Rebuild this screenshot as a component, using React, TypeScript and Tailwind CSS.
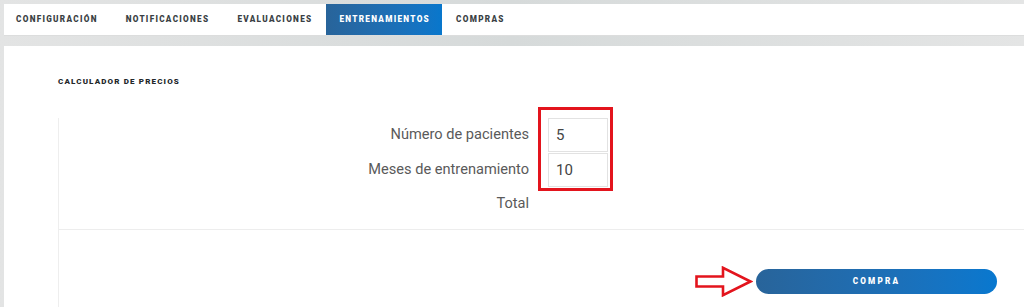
const tabs = ["CONFIGURACIÓN", "NOTIFICACIONES", "EVALUACIONES", "ENTRENAMIENTOS", "COMPRAS"];

const Arrow = () => (
  <svg width="58" height="31" viewBox="0 0 58 31" className="shrink-0">
    <path
      d="M1.5 10.5 H28 V1.8 L55.5 15.5 L28 29.2 V20.5 H1.5 Z"
      fill="white"
      stroke="#e3141d"
      strokeWidth="2.6"
      strokeLinejoin="miter"
    />
  </svg>
);

const App = () => {
  return (
    <div className="w-full h-[307px] overflow-hidden pl-[4px] pt-[4px] bg-gradient-to-r from-[#e3e4e4] via-[#d6dada] to-[#e4e5e5] font-['Roboto',sans-serif]">
      <div className="h-[32px] bg-white border-b border-[#dcdddd] flex items-stretch">
        {tabs.map((t, i) => (
          <div
            key={t}
            className={
              t === "ENTRENAMIENTOS"
                ? "pl-[13px] pr-[12px] flex items-center text-[8.2px] font-black tracking-[1.3px] text-white bg-gradient-to-r from-[#28649a] to-[#0877cc]"
                : i === 0
                ? "pl-[12px] pr-[14px] flex items-center text-[8.2px] font-black tracking-[1.3px] text-[#3a3f44]"
                : "px-[14px] flex items-center text-[8.2px] font-black tracking-[1.3px] text-[#3a3f44]"
            }
          >
            {t}
          </div>
        ))}
      </div>

      <div className="mt-[10px] h-[300px] bg-white pl-[54px] pt-[30px]">
        <p className="text-[8px] font-black tracking-[1.15px] text-[#23272b]">CALCULADOR DE PRECIOS</p>

        <div className="mt-[30px] border-l border-[#eeeeee] rounded-bl-[10px] h-[200px]">
          <div className="relative border-b border-[#ededed] pb-[8px]">
            <div className="flex items-center h-[34px]">
              <div className="w-[470px] text-right text-[14.6px] text-[#5a5a5a]">Número de pacientes</div>
              <div className="ml-[19px] w-[60px] h-[34px] border border-[#e2e2e2] flex items-center pl-[7px] text-[15px] text-[#444]">5</div>
            </div>
            <div className="flex items-center h-[34px] mt-[1px]">
              <div className="w-[470px] text-right text-[14.6px] text-[#5a5a5a]">Meses de entrenamiento</div>
              <div className="ml-[19px] w-[60px] h-[34px] border border-[#e2e2e2] flex items-center pl-[7px] text-[15px] text-[#444]">10</div>
            </div>
            <div className="flex items-center h-[34px]">
              <div className="w-[470px] text-right text-[14.6px] text-[#5a5a5a]">Total</div>
            </div>
            <div className="absolute left-[479px] top-[-11px] w-[75px] h-[84px] border-[3px] border-[#e3141d]" />
          </div>

          <div className="flex items-center pt-[36px] pl-[636px]">
            <Arrow />
            <button className="ml-[3px] w-[241px] h-[25px] rounded-full bg-gradient-to-r from-[#28649a] to-[#0878cf] text-white text-[8.2px] font-black tracking-[2.2px]">
              COMPRA
            </button>
          </div>
        </div>
      </div>
    </div>
  );
};

export default App;
